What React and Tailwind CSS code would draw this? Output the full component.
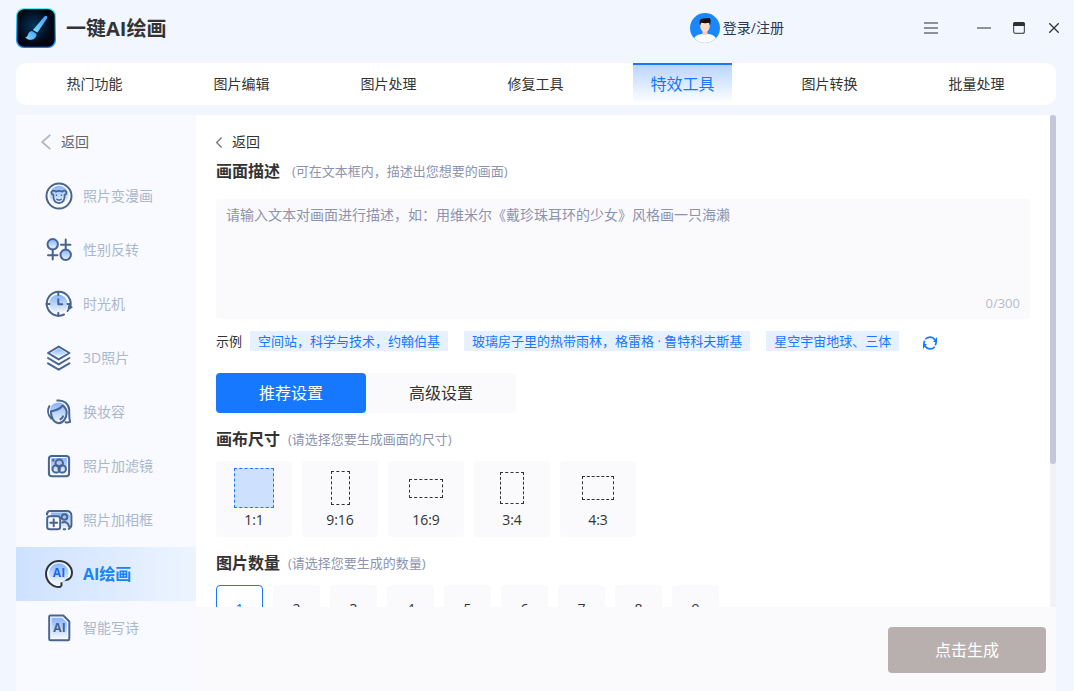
import { useState } from 'react';

const tabs = ['热门功能', '图片编辑', '图片处理', '修复工具', '特效工具', '图片转换', '批量处理'];

const examples = [
  '空间站，科学与技术，约翰伯基',
  '玻璃房子里的热带雨林，格雷格 · 鲁特科夫斯基',
  '星空宇宙地球、三体',
];

const ratios = [
  { label: '1:1', box: 'w-10 h-10' },
  { label: '9:16', box: 'w-[19px] h-[34px]' },
  { label: '16:9', box: 'w-[34px] h-[19px]' },
  { label: '3:4', box: 'w-6 h-8' },
  { label: '4:3', box: 'w-8 h-6' },
];

const counts = [1, 2, 3, 4, 5, 6, 7, 8, 9];

const Icon = ({ children }) => (
  <svg className="w-7 h-7 shrink-0" viewBox="0 0 28 28" fill="none" stroke="#48648f" strokeWidth="2" strokeLinecap="round" strokeLinejoin="round" aria-hidden="true">
    {children}
  </svg>
);

const menu = [
  {
    name: '照片变漫画',
    icon: (
      <Icon>
        <circle cx="14" cy="14" r="12.5" />
        <circle cx="14" cy="13" r="9.3" fill="url(#tint)" stroke="none" />
        <path strokeWidth="1.700" d="M10.600 9.600C9.600 8 6.600 8.400 6.500 10.600c0 1.200.8 2 1.900 2.200-.5 4.600 1.600 8.400 5.600 8.400s6.100-3.800 5.600-8.400c1.100-.2 1.900-1 1.900-2.200-.1-2.200-3.100-2.600-4.100-1-2-.8-4.800-.8-6.800 0z" />
        <path strokeWidth="1.400" d="M11.800 17.200c1 1 3.400 1 4.400 0M11.500 13.300v.1M16.500 13.300v.1" />
      </Icon>
    ),
  },
  {
    name: '性别反转',
    icon: (
      <Icon>
        <circle cx="7.700" cy="8.300" r="5.200" fill="url(#tint)" />
        <path d="M7.700 13.500v10M3 19.300h9.400" />
        <circle cx="20.700" cy="18.800" r="5.200" fill="url(#tint)" />
        <path d="M20.700 13.500V3.500M16 8.700h9.400" />
      </Icon>
    ),
  },
  {
    name: '时光机',
    icon: (
      <Icon>
        <circle cx="13.300" cy="13.800" r="9.200" fill="url(#tint)" stroke="none" />
        <path d="M25.300 16.800A12 12 0 1 0 19 24.500" />
        <path d="M13.300 2.500V5M13.300 23V26M1.500 14H4.500M22.500 14H25M13.300 9.200v5h4M26.600 17.200l-3 1.800.5-3M23.300 20l-.8 1" />
      </Icon>
    ),
  },
  {
    name: '3D照片',
    icon: (
      <Icon>
        <path fill="url(#tint)" stroke="none" d="M13.700 4.500l7.500 4.500-7.500 4.500L6.200 9z" />
        <path d="M13.700 2.600L24.400 9l-10.700 6.400L3 9zM3 14l10.700 6.400L24.400 14M3 19.300l10.700 6.400 10.700-6.400" />
      </Icon>
    ),
  },
  {
    name: '换妆容',
    icon: (
      <Icon>
        <path fill="url(#tint)" stroke="none" d="M5.500 13C4 8 9 4.500 13.500 4.500c5 0 8.500 4 8.500 9 0 6-4 11-8.300 11.300C9 24.500 6 19 5.500 13z" />
        <path d="M12.300 2.600C19 1.800 24 6.200 24.200 12c.1 3.500-.3 7.500.9 11.900-1.500.6-3 .7-4.600.4M4.300 8.200C2.200 12 2.700 17 6.300 20.500" />
        <path d="M6 13.200c4.800-.6 9-2.400 11.700-5.700 2.800 2.300 4 4.700 4 7 0 5.500-3.400 10.600-8 10.700C9 25.200 5.700 19.500 6 13.200zM18 18.300c-.6 1.300-1.400 2.200-2.500 2.900" />
      </Icon>
    ),
  },
  {
    name: '照片加滤镜',
    icon: (
      <Icon>
        <rect x="3.900" y="4" width="20.200" height="20.200" rx="3" />
        <rect x="6" y="6" width="16" height="16" rx="1" fill="url(#tint)" stroke="none" />
        <circle cx="14.200" cy="11.300" r="3.700" />
        <circle cx="11.200" cy="16.900" r="3.700" />
        <circle cx="17.200" cy="16.900" r="3.700" />
        <path d="M8.300 8.300v.1" strokeWidth="2.400" />
      </Icon>
    ),
  },
  {
    name: '照片加相框',
    icon: (
      <Icon>
        <path fill="url(#tint)" stroke="none" d="M6 6.500h16l3 3V20l-3 3h-5V10H6z" />
        <path d="M1.900 8.600C2 6.200 3 4.900 5 4.900h16.500c3 0 4.900 2 4.900 4.700v9c0 2.200-.8 3.500-2.600 4.300" />
        <rect x="2.200" y="10.200" width="13" height="13" rx="2.500" fill="#f8faff" />
        <path d="M8.700 13.200v7M5.200 16.700h7M18.700 23.200h1.500M17.200 16.500c3.300-1.400 6.300.5 6.800 4.200" />
        <circle cx="19.400" cy="11" r="2.800" />
      </Icon>
    ),
  },
  {
    name: 'AI绘画',
    icon: (
      <svg className="w-7 h-7 shrink-0" viewBox="0 0 28 28" aria-hidden="true">
        <path fill="#f0f6ff" stroke="#2f343b" strokeWidth="2" strokeLinejoin="round" d="M14.200 27C6.800 27 1 21 1 13.800 1 6.500 6.800 1 14 1s13 5.200 13 11.800c0 4.400-2.700 7.100-6.600 7.100-3 0-4.500 1.400-4 3.400.3 1.600.2 3.700-2.200 3.700z" />
        <circle cx="13.800" cy="13" r="9.800" fill="url(#tint)" />
        <text x="14" y="17" textAnchor="middle" fontSize="12" fontWeight="700" fill="#1468f5">AI</text>
      </svg>
    ),
  },
  {
    name: '智能写诗',
    icon: (
      <svg className="w-7 h-7 shrink-0" viewBox="0 0 28 28" aria-hidden="true">
        <path fill="#f8faff" stroke="#48648f" strokeWidth="2" strokeLinejoin="round" d="M5.500 1.500h12.800l6 6V25c0 .8-.5 1.300-1.300 1.300H5.500c-.8 0-1.300-.5-1.300-1.300V2.800c0-.8.5-1.300 1.300-1.300z" />
        <path fill="url(#tint)" d="M6.500 3.800h10.800l4.700 4.700v15.600H6.500z" />
        <text x="14.500" y="18" textAnchor="middle" fontSize="12" fontWeight="700" fill="#3f5f92">AI</text>
      </svg>
    ),
  },
];

const Logo = () => (
  <svg className="w-10 h-10" viewBox="0 0 40 40" aria-hidden="true">
    <defs>
      <linearGradient id="logoEdge" x1="0" y1="0" x2="0" y2="1">
        <stop offset="0" stopColor="#5cf0f5" />
        <stop offset="1" stopColor="#0f7df5" />
      </linearGradient>
      <radialGradient id="logoGlow" cx=".45" cy=".45" r=".5">
        <stop offset="0" stopColor="#04355c" />
        <stop offset="1" stopColor="#01040f" />
      </radialGradient>
      <linearGradient id="brush" x1="1" y1="0" x2="0" y2="1">
        <stop offset="0" stopColor="#3f9cf5" />
        <stop offset="1" stopColor="#7fe0ff" />
      </linearGradient>
    </defs>
    <rect width="40" height="40" rx="8" fill="url(#logoEdge)" />
    <rect x="1.300" y="1.300" width="37.400" height="37.400" rx="7" fill="url(#logoGlow)" />
    <path fill="url(#brush)" d="M28.600 8.300c1.500-1.200 3.400-.2 2.500 2L21.500 24.600l-4.600-2.700z" />
    <path fill="url(#brush)" d="M15.900 22.900l4.600 2.900c.3 3-2 5.800-5.400 6-2.500.1-4.300-.9-6.100-2.600 1.600 0 2.400-.8 2.900-2.500.7-2.200 1.900-3.500 4-3.800z" />
  </svg>
);

const Avatar = () => (
  <svg className="w-[30px] h-[30px]" viewBox="0 0 30 30" aria-hidden="true">
    <clipPath id="avatarClip"><circle cx="15" cy="15" r="15" /></clipPath>
    <g clipPath="url(#avatarClip)">
      <rect width="30" height="30" fill="#1a88fb" />
      <path fill="#fafcfd" d="M3 30c0-6 3.500-8.500 9-9h6c5.500.5 9 3 9 9z" />
      <path fill="#f9cdb8" d="M12.500 16h5v5c-.8 1.200-4.200 1.200-5 0z" />
      <path fill="#fdd9c7" d="M10.300 9h9.400v4.500c0 3-2 5.300-4.700 5.300s-4.700-2.300-4.700-5.300z" />
      <path fill="#160f12" d="M10.200 12.200C8.800 8.500 10 5.600 13 5.600l6.500-.5c1.500 1 1.500 4.400.4 7.100l-.8-2.500c-2.700.7-5.400.6-8 0z" />
    </g>
  </svg>
);

const SectionTitle = ({ title, hint, wide }) => (
  <div className={`flex items-center h-6 ${wide ? 'gap-3' : 'gap-2'}`}>
    <h2 className="text-base leading-6 font-bold">{title}</h2>
    <span className="text-[13px] leading-6 text-[#8c93b0]">{hint}</span>
  </div>
);

const App = () => {
  const [tab, setTab] = useState('特效工具');
  const [active, setActive] = useState('AI绘画');
  const [prompt, setPrompt] = useState('');
  const [mode, setMode] = useState('推荐设置');
  const [ratio, setRatio] = useState('1:1');
  const [count, setCount] = useState(1);

  return (
    <div className='h-screen flex flex-col bg-[#f1f6ff] pl-4 pr-[18px] text-[#333] text-sm overflow-hidden font-["Open_Sans","Noto_Sans_CJK_SC",sans-serif]'>
      {/* shared gradient for the menu icons */}
      <svg className="absolute w-0 h-0" aria-hidden="true">
        <linearGradient id="tint" x1="0" y1="0" x2="0" y2="1">
          <stop offset="0" stopColor="#86b4fd" />
          <stop offset="1" stopColor="#f0f6ff" />
        </linearGradient>
      </svg>

      {/* title bar */}
      <header className="flex items-center h-14 mb-[7px] shrink-0">
        <Logo />
        <h1 className="ml-[10px] pt-0.5 text-xl font-bold">一键AI绘画</h1>
        <button className="ml-auto mr-[140px] flex items-center gap-[3px] text-[#2c3550]">
          <Avatar />
          登录/注册
        </button>
        <div className="flex items-center -mr-[3px]">
          <button aria-label="菜单" className="mr-[39px]">
            <svg className="w-[14px] h-3" viewBox="0 0 14 12" stroke="#8f9199" strokeWidth="1.800"><path d="M0 1h14M0 6h14M0 11h14" /></svg>
          </button>
          <button aria-label="最小化" className="mr-[22px]">
            <svg className="w-[14px] h-3" viewBox="0 0 14 12" stroke="#8f9199" strokeWidth="2"><path d="M0 6h14" /></svg>
          </button>
          <button aria-label="最大化" className="mr-6">
            <svg className="w-3 h-3" viewBox="0 0 12 12" fill="none"><rect x=".6" y=".6" width="10.800" height="10.800" rx="2" stroke="#55565c" strokeWidth="1.200" /><path d="M0 4V2a2 2 0 0 1 2-2h8a2 2 0 0 1 2 2v2z" fill="#303133" /></svg>
          </button>
          <button aria-label="关闭">
            <svg className="w-[10px] h-[10px]" viewBox="0 0 10 10" stroke="#303133" strokeWidth="1.300"><path d="M.3.300l9.400 9.400M9.700.300L.3 9.700" /></svg>
          </button>
        </div>
      </header>

      <nav className="flex justify-between h-[42px] pl-[29px] pr-[30px] mb-[10px] shrink-0 bg-white rounded-[10px]">
        {tabs.map((item) => (
          <button
            key={item}
            onClick={() => setTab(item)}
            className={`w-[99px] ${tab === item ? 'h-10 border-t-2 border-[#1677ff] bg-linear-to-b from-[#b9d5ff] to-white text-base text-[#1677ff]' : 'h-[42px]'}`}
          >
            {item}
          </button>
        ))}
      </nav>

      <div className="flex flex-1 min-h-0">
        <aside className="w-[180px] shrink-0 bg-[#f8faff]">
          <button className="flex items-center gap-[10px] h-[54px] pl-[25px] text-[#666]">
            <svg className="w-[10px] h-4" viewBox="0 0 10 16" fill="none" stroke="#b5b7bc" strokeWidth="1.800"><path d="M9.300.8L1.200 8l8.100 7.200" /></svg>
            返回
          </button>
          <ul>
            {menu.map((item) => (
              <li key={item.name}>
                <button
                  onClick={() => setActive(item.name)}
                  className={`flex items-center gap-[10px] w-full h-[54px] pl-[29px] ${active === item.name ? 'bg-linear-to-r from-[#cde1ff] to-[#edf4ff] text-base font-bold text-[#1684fc]' : 'text-[#abb8cb]'}`}
                >
                  {item.icon}
                  {item.name}
                </button>
              </li>
            ))}
          </ul>
        </aside>

        <main className="flex flex-col flex-1 min-w-0 bg-white">
          <div className="flex flex-1 min-h-0">
            <div className="flex-1 min-w-0 px-5 pt-[17px] pb-5 overflow-y-auto [scrollbar-width:none]">
              <button className="flex items-center gap-[10px] h-5 mb-[7px]">
                <svg className="w-[6px] h-[11px]" viewBox="0 0 6 11" fill="none" stroke="#6b6e85" strokeWidth="1.200"><path d="M5.600.5l-5 5 5 5" /></svg>
                返回
              </button>
              <SectionTitle title="画面描述" hint="(可在文本框内，描述出您想要的画面)" wide />

              <div className="flex flex-col h-[120px] mt-4 px-[10px] py-[6px] bg-[#fafafc] rounded">
                <textarea
                  aria-label="画面描述"
                  maxLength={300}
                  value={prompt}
                  onChange={(e) => setPrompt(e.target.value)}
                  className="flex-1 w-full resize-none outline-none bg-transparent text-sm placeholder:text-[#8c93b0]"
                  placeholder="请输入文本对画面进行描述，如：用维米尔《戴珍珠耳环的少女》风格画一只海濑"
                />
                <span className="text-right text-[13px] leading-5 text-[#b5bacb]">{prompt.length}/300</span>
              </div>

              <div className="flex items-center h-5 mt-3 text-[13px] leading-5">
                <span className="mr-2">示例</span>
                <div className="flex gap-4">
                  {examples.map((text) => (
                    <button key={text} onClick={() => setPrompt(text)} className="h-5 px-2 whitespace-nowrap bg-[#e6f0ff] text-[#1677ff]">{text}</button>
                  ))}
                </div>
                <button aria-label="换一批" className="ml-6 pt-1">
                  <svg className="w-[14px] h-[14px]" viewBox="0 0 14 14" fill="none" stroke="#1677ff" strokeWidth="1.700">
                    <path d="M2.300 3.300A6 6 0 0 1 11.900 3.700M13 5A6 6 0 0 1 12.200 9.300M11.700 10.700A6 6 0 0 1 2.100 10.300M1 9A6 6 0 0 1 1.800 4.700" />
                    <path d="M14 1v5h-4zM0 13V8h4z" fill="#1677ff" stroke="none" />
                  </svg>
                </button>
              </div>

              <div className="flex mt-[22px] mb-[14px]">
                {['推荐设置', '高级设置'].map((item) => (
                  <button
                    key={item}
                    onClick={() => setMode(item)}
                    className={`w-[150px] h-10 rounded text-base ${mode === item ? 'bg-[#1677ff] text-white' : 'bg-[#fafafc]'}`}
                  >
                    {item}
                  </button>
                ))}
              </div>

              <SectionTitle title="画布尺寸" hint="(请选择您要生成画面的尺寸)" />
              <div className="flex gap-[10px] mt-[10px] mb-[14px]">
                {ratios.map(({ label, box }) => (
                  <label key={label} className="relative flex flex-col items-center w-[76px] h-[76px] pt-[7px] bg-[#fafafc] rounded cursor-pointer">
                    <input type="radio" name="ratio" className="sr-only" checked={ratio === label} onChange={() => setRatio(label)} />
                    <span className="flex items-center justify-center h-10">
                      <span className={`${box} border border-dashed ${ratio === label ? 'bg-[#cde0fd] border-[#1677ff]' : 'border-[#333]'}`}></span>
                    </span>
                    <span className="mt-[2px] leading-5">{label}</span>
                  </label>
                ))}
              </div>

              <SectionTitle title="图片数量" hint="(请选择您要生成的数量)" />
              <div className="flex gap-[10px] mt-[10px]">
                {counts.map((n) => (
                  <label key={n} className={`relative flex items-center justify-center w-[47px] h-[47px] rounded cursor-pointer ${count === n ? 'bg-white border border-[#1677ff] text-[#1677ff]' : 'bg-[#fafafc]'}`}>
                    <input type="radio" name="count" className="sr-only" checked={count === n} onChange={() => setCount(n)} />
                    {n}
                  </label>
                ))}
              </div>
            </div>
            <div className="w-[6px] bg-[#f1f1f6]">
              <div className="w-full h-[71%] rounded-full bg-[#c3c7d9]"></div>
            </div>
          </div>

          <footer className="flex justify-end h-[84px] pt-5 pr-[10px] shrink-0 bg-[#fafafc]">
            <button className="w-[158px] h-[46px] rounded bg-[#b8b0af] text-white text-base">点击生成</button>
          </footer>
        </main>
      </div>
    </div>
  );
};

export default App;
